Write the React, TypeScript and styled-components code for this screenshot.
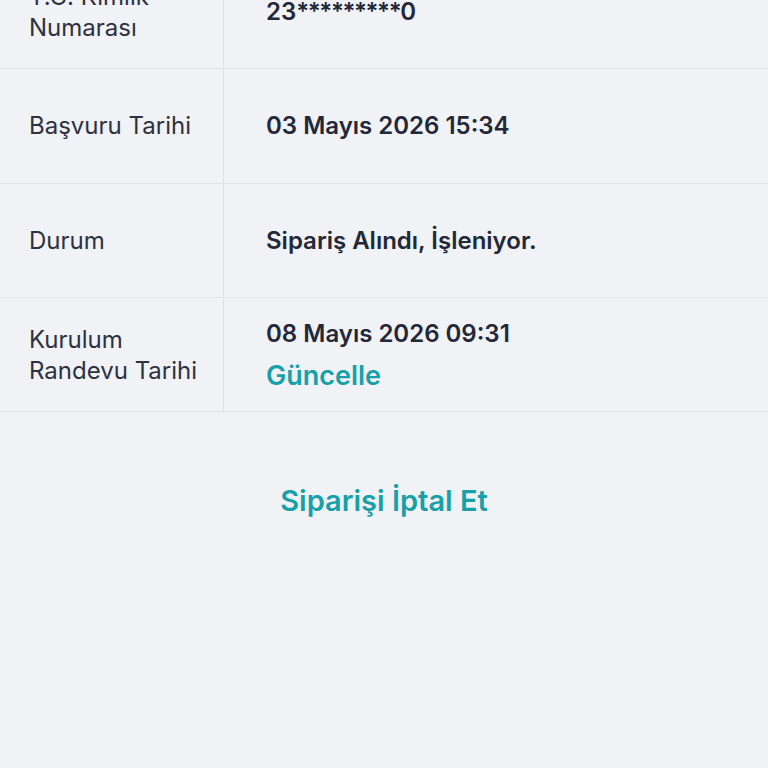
import styled, { createGlobalStyle } from "styled-components";

const Global = createGlobalStyle`
  html, body {
    margin: 0;
    padding: 0;
    background: #f0f2f6;
  }
  body {
    font-family: "Inter", "Noto Sans", sans-serif;
    color: #272b38;
  }
`;

const Page = styled.div`
  width: 768px;
  height: 768px;
  overflow: hidden;
  background: #f0f2f6;
`;

const Table = styled.div`
  margin-top: -45px;
`;

const Row = styled.div`
  box-sizing: border-box;
  display: grid;
  grid-template-columns: 224px 1fr;
  height: 114.33px;
  border-bottom: 1px solid #dfe2e8;
`;

const Label = styled.div`
  display: flex;
  align-items: center;
  padding-left: 29px;
  border-right: 1px solid #dfe2e8;
  font-size: 24px;
  font-weight: 400;
  line-height: 31px;
  color: #2d3140;
`;

const Value = styled.div`
  display: flex;
  flex-direction: column;
  justify-content: center;
  padding-left: 42px;
  font-size: 24px;
  font-weight: 600;
  line-height: 31px;
  color: #232839;
`;

const Masked = styled.span`
  letter-spacing: -1.4px;
`;

const Link = styled.a<{ $size?: number }>`
  color: #17a0a8;
  font-weight: 600;
  font-size: ${(p) => p.$size ?? 27}px;
  text-decoration: none;
  cursor: pointer;
`;

const ValueLink = styled(Link)`
  margin-top: 11px;
  line-height: 31px;
`;

const Actions = styled.div`
  display: flex;
  justify-content: center;
  padding-top: 71px;
`;

const rows = [
  { label: ["Başvuru Tarihi"], value: "03 Mayıs 2026 15:34" },
  { label: ["Durum"], value: "Sipariş Alındı, İşleniyor." },
];

export default function App() {
  return (
    <Page>
      <Global />
      <Table>
        <Row>
          <Label>
            <span>
              T.C. Kimlik
              <br />
              Numarası
            </span>
          </Label>
          <Value>
            <span>
              23<Masked>*********</Masked>0
            </span>
          </Value>
        </Row>
        {rows.map((r) => (
          <Row key={r.value}>
            <Label>{r.label}</Label>
            <Value>{r.value}</Value>
          </Row>
        ))}
        <Row>
          <Label>
            <span>
              Kurulum
              <br />
              Randevu Tarihi
            </span>
          </Label>
          <Value>
            <span>08 Mayıs 2026 09:31</span>
            <ValueLink>Güncelle</ValueLink>
          </Value>
        </Row>
      </Table>
      <Actions>
        <Link $size={29}>Siparişi İptal Et</Link>
      </Actions>
    </Page>
  );
}
